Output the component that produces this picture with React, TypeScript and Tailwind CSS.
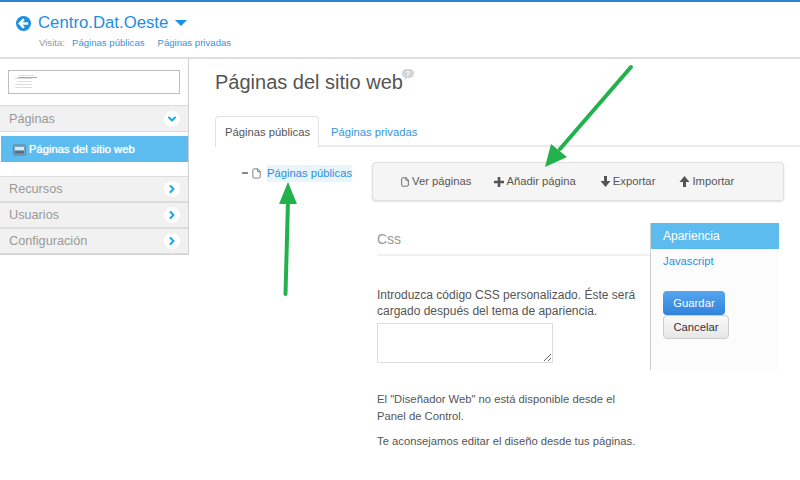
import { ChevronDown, ChevronRight, File } from 'lucide-react';

const font = "font-['Liberation_Sans',Arial,sans-serif]";

function BackIcon() {
  return (
    <svg width="15" height="15" viewBox="0 0 16 16">
      <circle cx="8" cy="8" r="8" fill="#1a8fe3" />
      <path d="M8.500 3.400 4 8l4.500 4.600M4.600 8H13" fill="none" stroke="#fff" strokeWidth="2.6" />
    </svg>
  );
}

function SearchLines() {
  return (
    <svg width="24" height="16" viewBox="0 0 24 16" className="ml-[5px]">
      <path d="M4 1.500H20M4 7.500H18M1 10.500H18M1 13.500H18M1 4.500H18" stroke="#ddd" strokeWidth="1" />
      <path d="M4 3.500H23" stroke="#aaa" strokeWidth="1" />
    </svg>
  );
}

function PlusGlyph() {
  return (
    <svg width="10" height="10" viewBox="0 0 10 10" fill="#555">
      <path d="M3.700 0h2.600v3.700H10v2.600H6.300V10H3.700V6.300H0V3.700h3.700z" />
    </svg>
  );
}

function ArrowDownGlyph() {
  return (
    <svg width="11" height="11" viewBox="0 0 11 11" fill="#555">
      <path d="M4 0h3v5h3.500L5.500 11 .5 5H4z" />
    </svg>
  );
}

function ArrowUpGlyph() {
  return (
    <svg width="11" height="11" viewBox="0 0 11 11" fill="#555">
      <path d="M4 11h3V6h3.500L5.500 0 .5 6H4z" />
    </svg>
  );
}

function HelpBubble() {
  return (
    <span className="relative ml-[-1px] mt-0 flex h-[9px] w-[12px] items-center justify-center rounded-full bg-[#d4d4d4] text-[7px] font-bold leading-none text-white">
      ?
      <span className="absolute bottom-[-2px] left-[3px] h-0 w-0 border-r-[3px] border-t-[3px] border-r-transparent border-t-[#d4d4d4]" />
    </span>
  );
}

function SectionRow({ label, open, h }: { label: string; open?: boolean; h: string }) {
  return (
    <div className={`flex items-center justify-between border-y border-[#dcdcdc] bg-[#f1f1f1] pl-[9px] pr-[8px] text-[12.700px] text-[#999] ${h}`}>
      <span className="pt-[2px]">{label}</span>
      <span className="flex h-4 w-4 items-center justify-center rounded-full bg-white text-[#12a9e6]">
        {open ? <ChevronDown size={12} strokeWidth={4} /> : <ChevronRight size={12} strokeWidth={4} />}
      </span>
    </div>
  );
}

function ToolItem({ icon, label }: { icon: React.ReactNode; label: string }) {
  return (
    <span className="flex items-center gap-[2px] whitespace-nowrap">
      {icon}
      {label}
    </span>
  );
}

export default function App() {
  return (
    <div className={`relative h-[480px] w-[800px] overflow-hidden bg-white ${font}`}>
      <header className="h-[59px] border-t-2 border-b-2 border-t-[#2d83d1] border-b-[#dedede] pl-4 pt-[11px]">
        <div className="flex items-center gap-[7px]">
          <BackIcon />
          <span className="text-[16.750px] leading-5 text-[#1a8fe3]">Centro.Dat.Oeste</span>
          <span className="h-0 w-0 border-x-[6px] border-t-[6px] border-x-transparent border-t-[#1a8fe3]" />
        </div>
        <div className="mt-[2px] flex pl-[23px] text-[9.600px] leading-4 text-[#3a94dc]">
          <span className="w-[33px] text-[#999]">Visita:</span>
          <span className="w-[85.500px]">Páginas públicas</span>
          <span>Páginas privadas</span>
        </div>
      </header>

      <div className="flex">
        <aside className="h-[196px] w-[189px] shrink-0 border-r border-b border-[#d2d2d2]">
          <div className="px-2 pt-[11px] pb-[11px]">
            <div className="flex h-6 w-[172px] items-center border border-[#bdbdbd]">
              <SearchLines />
            </div>
          </div>
          <SectionRow label="Páginas" open h="h-[27px]" />
          <div className="h-[44px] bg-white pt-[4px]">
            <div className="ml-px flex h-[26px] items-center gap-[3px] bg-[#5cbcf0] pl-3 pt-[1px] text-[11.250px] text-white [text-shadow:0_0_1px_#fff]">
              <svg width="13" height="12" viewBox="0 0 13 12">
                <rect x="0.5" y="1" width="12" height="10" rx="1" fill="#7fa6c4" stroke="#6b8091" />
                <rect x="2" y="3" width="9" height="3" fill="#dfe9f2" />
                <rect x="2" y="7" width="9" height="2.5" fill="#4e6f8a" />
              </svg>
              Páginas del sitio web
            </div>
          </div>
          <SectionRow label="Recursos" h="h-[26px]" />
          <SectionRow label="Usuarios" h="h-[26px]" />
          <SectionRow label="Configuración" h="h-[26px]" />
        </aside>

        <main className="flex-1 pl-[26px]">
          <h1 className="mt-[10px] flex items-start text-[20px] leading-[27px] text-[#555]">
            Páginas del sitio web
            <HelpBubble />
          </h1>
          <div className="mt-[20px] flex h-[31px] border-b-2 border-[#ececec] text-[11.250px]">
            <div className="h-[31px] w-[104px] rounded-t border border-b-0 border-[#e2e2e2] bg-white pl-[9px] pt-[7px] text-[#555]">Páginas públicas</div>
            <div className="pl-3 pt-[8px] text-[#3a94dc]">Páginas privadas</div>
          </div>

          <div className="flex">
            <div className="w-[157px] shrink-0 pl-[27px] pt-[18px]">
              <div className="flex items-center text-[11.250px] text-[#2b8fe0]">
                <span className="mr-[3px] h-[2px] w-[6px] bg-[#888]" />
                <File size={11} className="mr-[5px] text-[#777]" />
                <span className="bg-[#e8f5fd]">Páginas públicas</span>
              </div>
            </div>

            <div className="w-[412px] pt-[15px]">
              <div className="flex h-[39px] items-center rounded-sm border border-[#e0e0e0] bg-[#f5f5f5] pl-[27px] text-[11.250px] text-[#555] shadow-[0_1px_2px_rgba(0,0,0,0.12)]">
                <ToolItem icon={<File size={10} />} label="Ver páginas" />
                <span className="ml-[23px]"><ToolItem icon={<PlusGlyph />} label="Añadir página" /></span>
                <span className="ml-[24px]"><ToolItem icon={<ArrowDownGlyph />} label="Exportar" /></span>
                <span className="ml-[24px]"><ToolItem icon={<ArrowUpGlyph />} label="Importar" /></span>
              </div>

              <div className="mt-[22px] flex">
                <div className="w-[278px] pl-[5px] text-[11.250px] leading-[17px] text-[#555]">
                  <div className="h-[33px] border-b-2 border-[#f0f0f0] pt-[7px] text-[14px] leading-[18px] text-[#999]">Css</div>
                  <p className="mt-[31px] text-xs leading-[16px]">Introduzca código CSS personalizado. Éste será cargado después del tema de apariencia.</p>
                  <textarea className="mt-[4px] block h-[40px] w-[176px] border border-[#ddd] bg-white" />
                  <p className="mt-[28px] w-[250px]">El "Diseñador Web" no está disponible desde el Panel de Control.</p>
                  <p className="mt-[8px]">Te aconsejamos editar el diseño desde tus páginas.</p>
                </div>
                <div className="h-[147px] w-[129px] border-l border-[#ccc] bg-[#fcfcfc]">
                  <div className="h-[26px] bg-[#5cbcf0] pl-3 text-xs leading-[26px] text-white">Apariencia</div>
                  <div className="pl-3 pt-[4px] text-[11.250px] leading-[16px] text-[#2b8fe0]">Javascript</div>
                  <div className="pl-3 pt-[22px]">
                    <div className="h-6 w-[62px] rounded-sm bg-gradient-to-b from-[#57a5ef] to-[#2f83dc] text-center text-[11.250px] leading-6 text-white">Guardar</div>
                    <div className="h-6 w-[66px] rounded-sm border border-[#ccc] bg-gradient-to-b from-[#fafafa] to-[#e6e6e6] text-center text-[11.250px] leading-[22px] text-[#333]">Cancelar</div>
                  </div>
                </div>
              </div>
            </div>
          </div>
        </main>
      </div>

      <svg width="800" height="480" className="pointer-events-none absolute left-0 top-0">
        <path d="M631 67 560 149" stroke="#22b14c" strokeWidth="4" strokeLinecap="round" />
        <path d="M545 167 551 144 567 157Z" fill="#22b14c" />
        <path d="M285.500 294 288 200" stroke="#22b14c" strokeWidth="4" strokeLinecap="round" />
        <path d="M288 182 279 204 297 204Z" fill="#22b14c" />
      </svg>
    </div>
  );
}
